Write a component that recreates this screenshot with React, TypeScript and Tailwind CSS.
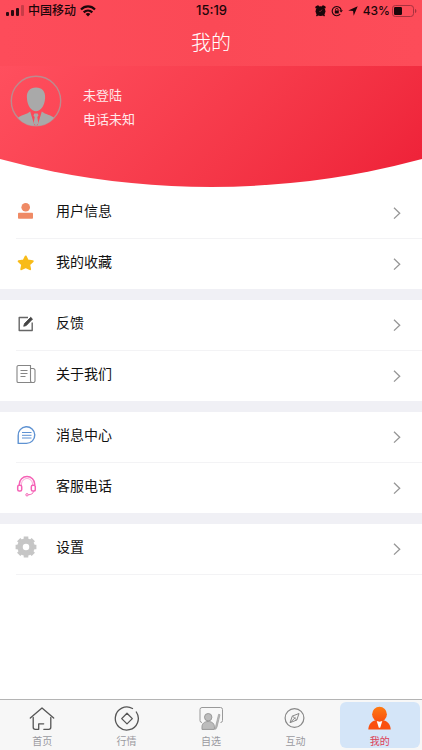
import type { ReactNode } from 'react';

const CJK = "font-['Liberation_Sans','Noto_Sans_CJK_SC',sans-serif]";

function SignalIcon() {
  return (
    <svg width="18" height="12" viewBox="0 0 18 12" fill="#2b0a10" aria-hidden="true">
      <rect x="0" y="7" width="3" height="4" rx="1" />
      <rect x="5" y="5" width="3" height="6" rx="1" />
      <rect x="10" y="3" width="3" height="8" rx="1" />
      <rect x="15" y="0" width="3" height="11" rx="1" opacity=".25" />
    </svg>
  );
}

function WifiIcon() {
  return (
    <svg width="16" height="12" viewBox="0 0 16 12" fill="none" stroke="#1c060a" strokeWidth="2.2" aria-hidden="true">
      <path d="M1 4.6C5 .4 11 .4 15 4.6" />
      <path d="M3.700 7.400C6.200 4.900 9.800 4.900 12.300 7.400" />
      <path d="M8 11.400 5.600 9C7 7.700 9 7.700 10.400 9Z" fill="#1c060a" stroke="none" />
    </svg>
  );
}

function AlarmIcon() {
  return (
    <svg width="11" height="12" viewBox="0 0 11 12" aria-hidden="true">
      <path d="M1.500 2.300 2.900 1.500M9.500 2.300 8.100 1.500" stroke="#1c060a" strokeWidth="2.400" strokeLinecap="round" />
      <path d="m2.600 9.600-.7.900M8.400 9.600l.7.900" stroke="#1c060a" strokeWidth="1.600" strokeLinecap="round" />
      <circle cx="5.500" cy="6.200" r="4.900" fill="#1c060a" />
      <path d="M7 4.600 5.600 6.400H4.200" stroke="#b5323e" strokeWidth=".7" fill="none" />
    </svg>
  );
}

function RotationLockIcon() {
  return (
    <svg width="12" height="12" viewBox="0 0 12 12" fill="none" stroke="#1c060a" strokeWidth="1.100" aria-hidden="true">
      <path d="M9.200 9.200A4.600 4.600 0 1 1 10.200 5" />
      <path d="M8.300 5.300h3.600l-1.800 2.300z" fill="#1c060a" stroke="none" />
      <path d="M4.500 5.600V4.700a1.300 1.300 0 0 1 2.600 0v.9" strokeWidth=".9" />
      <rect x="3.800" y="5.400" width="4" height="3" rx=".4" fill="#1c060a" stroke="none" />
    </svg>
  );
}

function LocationIcon() {
  return (
    <svg width="10" height="10" viewBox="0 0 10 10" fill="#1c060a" aria-hidden="true">
      <path d="M9.700.3 5.700 9.800 5.100 5 .2 4.400Z" />
    </svg>
  );
}

function BatteryIcon() {
  return (
    <svg width="25" height="12" viewBox="0 0 25 12" aria-hidden="true">
      <rect x=".5" y=".5" width="21" height="11" rx="2.800" fill="none" stroke="#a8323f" />
      <rect x="2" y="2" width="8" height="8" rx="1.200" fill="#1c060a" />
      <path d="M23 4v4c1-.4 1.400-1.200 1.400-2S24 4.400 23 4Z" fill="#a8323f" />
    </svg>
  );
}

function Avatar() {
  return (
    <svg width="52" height="52" viewBox="0 0 52 52" role="img" aria-label="头像">
      <circle cx="26" cy="26" r="24.700" fill="none" stroke="#bd8a8e" strokeWidth="1.400" />
      <path
        d="M26 12.500c6 0 9.500 3.700 9.100 10.500-.3 7.500-4.400 13.200-9.100 13.200S17.200 30.500 16.900 23c-.4-6.800 3.100-10.500 9.100-10.500Z"
        fill="#a9a9a9"
      />
      <path d="M20.200 36.500 24.500 50.700C17.300 50.200 11.400 47.200 8 42.700c3.300-2.900 8.500-3 12.200-6.200Z" fill="#a9a9a9" />
      <path d="M31.800 36.500 27.500 50.700C34.700 50.200 40.600 47.200 44 42.700c-3.300-2.900-8.500-3-12.200-6.200Z" fill="#a9a9a9" />
      <path d="M24.300 38.400h3.400l.8 2-1.200 1.700 1.100 6.200L26 50.700l-2.400-2.400 1.100-6.200-1.200-1.700Z" fill="#a9a9a9" />
    </svg>
  );
}

const icons: Record<string, ReactNode> = {
  user: (
    <svg width="20" height="20" viewBox="0 0 20 20" fill="#ef8a65">
      <circle cx="9.700" cy="6.200" r="4.300" />
      <rect x="2" y="11.700" width="15" height="6" rx=".8" />
    </svg>
  ),
  star: (
    <svg width="20" height="20" viewBox="0 0 20 20" fill="#f8bb18" stroke="#f8bb18" strokeWidth="2" strokeLinejoin="round">
      <path d="m9.700 4.500 2.100 4.100 4.900.7-3.500 3.300.9 4.600-4.400-2.200-4.400 2.200.9-4.600-3.500-3.300 4.900-.7Z" />
    </svg>
  ),
  edit: (
    <svg width="20" height="20" viewBox="0 0 20 20" fill="none" stroke="#666" strokeWidth="1.400">
      <path d="M12 4.500H3.200v13h13V9.500" strokeLinejoin="round" />
      <path d="M14.700 4.300 16.500 6.100 10.300 12.500 7.700 13.300 8.500 10.600Z" stroke="#444" fill="#444" strokeWidth=".8" />
    </svg>
  ),
  news: (
    <svg width="20" height="20" viewBox="0 0 20 20" fill="none" stroke="#858585" strokeWidth="1.100">
      <path d="M14.500 1.500h-12A1.500 1.500 0 0 0 1 3v14.200A1.300 1.300 0 0 0 2.300 18.500H17a2 2 0 0 1-2.500-2Z" />
      <path d="M14.500 4.500h2.700a1.800 1.800 0 0 1 1.800 1.800v10.400A1.800 1.800 0 0 1 17 18.500M4.500 6.500h7M4.500 9.500h7M4.500 12.500h5" />
    </svg>
  ),
  message: (
    <svg width="20" height="20" viewBox="0 0 20 20" fill="none" stroke="#5e92d2">
      <path d="M2.200 18.400v-7.600a8.300 8.300 0 1 1 8.300 7.600Z" strokeWidth="1.400" strokeLinejoin="round" />
      <path d="M6 7.500h9.500M6 10.300h9.500M6 13h9.500" strokeWidth="1" />
    </svg>
  ),
  service: (
    <svg width="20" height="22" viewBox="0 0 20 22" fill="none" stroke="#f562b6" strokeWidth="1.500">
      <path d="M3.300 10V9.200a7.700 7.700 0 0 1 15.400 0v.8" />
      <path d="M5.500 10V9a5.500 5.500 0 0 1 11 0v1" strokeWidth=".9" opacity=".6" />
      <rect x="1.700" y="10.300" width="4" height="5.800" rx="1.500" />
      <rect x="15.300" y="10.300" width="4" height="5.800" rx="1.500" />
      <path d="M17.700 16.300c-.5 2.200-2.600 3.400-5.500 3.500" strokeWidth="1" />
      <circle cx="11" cy="19.800" r="1.200" strokeWidth="1" />
    </svg>
  ),
  gear: (
    <svg width="22" height="22" viewBox="0 0 22 22" fill="none">
      <circle cx="11" cy="11" r="6" stroke="#c6c6c6" strokeWidth="5.500" />
      <g stroke="#c6c6c6" strokeWidth="4.600">
        <path d="M11 .6v4M11 17.400v4M.6 11h4M17.400 11h4" />
        <path d="m3.700 3.700 2.800 2.800M15.500 15.500l2.800 2.800M18.300 3.700l-2.800 2.800M6.500 15.500l-2.800 2.800" />
      </g>
    </svg>
  ),
};

function MenuRow({ icon, label }: { icon: string; label: string }) {
  return (
    <li className="pl-4">
      <button type="button" className="flex h-[50px] w-full items-center pr-5 text-left">
        <span className="flex w-5 shrink-0 items-center justify-center pb-1 [&>svg]:shrink-0" aria-hidden="true">
          {icons[icon]}
        </span>
        <span className="ml-5 flex-1 pb-1 text-sm leading-5 text-[#111]">{label}</span>
        <svg width="10" height="14" viewBox="0 0 10 14" fill="none" stroke="#969696" strokeWidth="1.300" aria-hidden="true">
          <path d="M2 1.800 7.700 7.200 2 12.600" />
        </svg>
      </button>
    </li>
  );
}

const groups = [
  [
    { icon: 'user', label: '用户信息' },
    { icon: 'star', label: '我的收藏' },
  ],
  [
    { icon: 'edit', label: '反馈' },
    { icon: 'news', label: '关于我们' },
  ],
  [
    { icon: 'message', label: '消息中心' },
    { icon: 'service', label: '客服电话' },
  ],
  [{ icon: 'gear', label: '设置' }],
];

const tabs: { label: string; active?: boolean; icon: ReactNode }[] = [
  {
    label: '首页',
    icon: (
      <svg width="26" height="26" viewBox="0 0 26 26" fill="none" stroke="#555" strokeWidth="1.300" strokeLinecap="round" strokeLinejoin="round">
        <path d="M1.300 12 13 2l11.700 10" />
        <path d="M4.200 11.500v9.800a2 2 0 0 0 2 2h3.500v-5.500h5" />
        <path d="M21.800 11.500v9.800a2 2 0 0 1-2 2h-5" />
      </svg>
    ),
  },
  {
    label: '行情',
    icon: (
      <svg width="26" height="26" viewBox="0 0 26 26" fill="none" stroke="#555" strokeWidth="1.300" strokeLinejoin="round">
        <path d="M18.500 2.500A11.500 11.500 0 1 0 22.300 6" strokeLinecap="round" />
        <path d="m13 7.300 5.300 5.300L13 17.900l-5.300-5.300Z" />
      </svg>
    ),
  },
  {
    label: '自选',
    icon: (
      <svg width="26" height="26" viewBox="0 0 26 26" fill="none" stroke="#999" strokeWidth="1">
        <path d="M4 16.500a2 2 0 0 1-2-2v-11a2 2 0 0 1 2-2h18.500a2 2 0 0 1 2 2v11a2 2 0 0 1-2 2" />
        <path d="M4 23.400v-2.600c0-3 2.200-5.300 6.200-5.300s6.200 2.300 6.200 5.300v2.600Z" fill="#bcbcbc" />
        <circle cx="10.200" cy="11.200" r="3.700" fill="#bcbcbc" />
        <path d="M20.600 8.300 17.600 20.600V23.400L19 21 22 8.700Z" fill="#bcbcbc" strokeWidth=".7" />
      </svg>
    ),
  },
  {
    label: '互动',
    icon: (
      <svg width="26" height="26" viewBox="0 0 26 26" fill="none" stroke="#888" strokeWidth="1.200" strokeLinejoin="round">
        <circle cx="12.500" cy="12" r="9.400" />
        <path d="m17 7.500-2.200 6.500-6.800 2.700 2.300-6.600ZM10.500 10.100l4.200 3.900M8 16.700l5.500-5.300" strokeWidth="1" />
      </svg>
    ),
  },
  {
    label: '我的',
    active: true,
    icon: (
      <svg width="26" height="26" viewBox="0 0 26 26">
        <defs>
          <linearGradient id="me" x1="0" y1="0" x2="0" y2="1">
            <stop offset="0" stopColor="#ff7a12" />
            <stop offset="1" stopColor="#f9500f" />
          </linearGradient>
        </defs>
        <circle cx="12.500" cy="8.200" r="7.400" fill="url(#me)" />
        <path d="M1.300 23.500c.2-4.800 2.700-8 7.200-9.300h8c4.500 1.300 7 4.500 7.200 9.300Z" fill="#fa500f" />
        <path d="m9.700 15 2.800.8 2.800-.8-2.100 6.700h-1.400Z" fill="#fff" />
      </svg>
    ),
  },
];

export default function App() {
  return (
    <div className={`flex min-h-screen flex-col bg-white ${CJK}`}>
      <header className="bg-linear-to-r from-[#fd4c5a] via-[#fb4956] to-[#fd4c59]">
        <div className="grid h-[21px] grid-cols-[1fr_auto_1fr] items-center pr-[5px] pl-1.5 text-xs font-medium text-[#1c060a]">
          <div className="flex items-center gap-1">
            <SignalIcon />
            <span>中国移动</span>
            <WifiIcon />
          </div>
          <time className="font-[Inter,sans-serif] text-[13px]">15:19</time>
          <div className="flex items-center justify-end gap-[5px]">
            <AlarmIcon />
            <RotationLockIcon />
            <LocationIcon />
            <span className="flex items-center gap-0.5 font-[Inter,sans-serif]">
              43%
              <BatteryIcon />
            </span>
          </div>
        </div>
        <h1 className="h-[45px] pt-2 text-center text-xl leading-7 font-light text-white">我的</h1>
      </header>

      <main className="flex-1">
        <section className="flex h-[122px] gap-[21px] bg-linear-135 from-[#ff4f5e] to-[#ee1f37] pt-[9px] pl-2.5 text-[13px] leading-6 text-[#ffe9eb] [clip-path:ellipse(192%_809px_at_50%_calc(100%_-_810px))]">
          <Avatar />
          <div className="pt-[9px]">
            <p>未登陆</p>
            <p>电话未知</p>
          </div>
        </section>

        <div className="flex flex-col gap-[11px] bg-[#f0f0f5]">
          {groups.map((rows, i) => (
            <ul
              key={i}
              className="bg-white [&>li+li]:bg-[linear-gradient(#f3f3f5,#f3f3f5)] [&>li+li]:bg-size-[100%_1px] [&>li+li]:bg-position-[16px_0] [&>li+li]:bg-no-repeat [&>li+li]:pt-px"
            >
              {rows.map((row) => (
                <MenuRow key={row.label} {...row} />
              ))}
            </ul>
          ))}
        </div>
        <hr className="ml-4 border-[#f3f3f5]" />
      </main>

      <nav className="sticky bottom-0 flex h-[51px] border-t border-[#b4b4b4] bg-[#f7f7f7]">
        {tabs.map((tab) => (
          <button
            type="button"
            key={tab.label}
            aria-current={tab.active ? 'page' : undefined}
            className={`mx-0.5 my-0.5 flex flex-1 flex-col items-center gap-1 rounded-md pt-1 text-[10px] leading-3 ${
              tab.active ? 'bg-[#d4e5f8] text-[#dd4055]' : 'text-[#9a9aa0]'
            }`}
          >
            {tab.icon}
            <span>{tab.label}</span>
          </button>
        ))}
      </nav>
    </div>
  );
}
